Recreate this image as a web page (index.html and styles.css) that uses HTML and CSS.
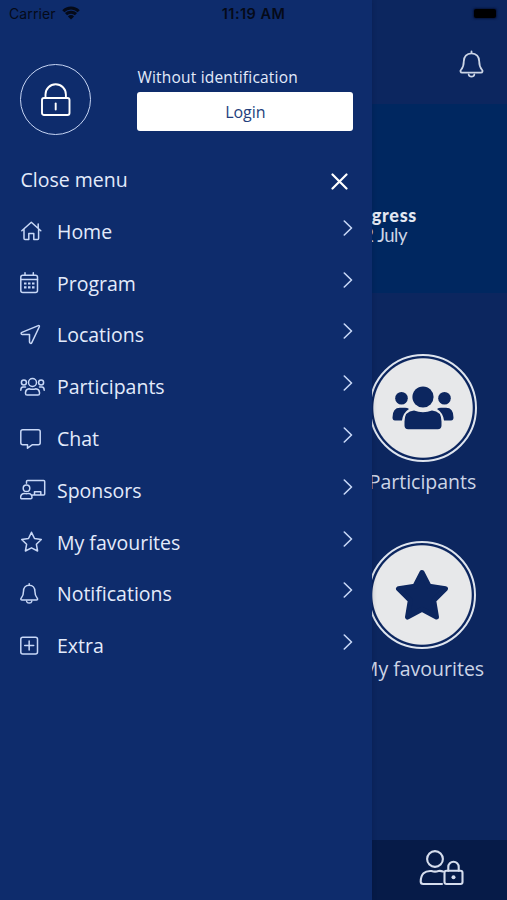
FILE: index.html
```html
<!DOCTYPE html>
<html lang="en">
<head>
<meta charset="utf-8">
<title>Congress</title>
<link rel="stylesheet" href="styles.css">
</head>
<body>
<svg class="defs" width="0" height="0">
  <defs>
    <symbol id="chevron" viewBox="0 0 10 16"><path d="M1.3 1 8.5 8l-7.2 7"/></symbol>
    <symbol id="bell" viewBox="0 0 24 26"><path d="M12 .8v2M12 2.800c-4.700 0-7.400 3.300-7.400 7.600 0 5.400-1.400 6.800-2.700 8.200-1 1.100-.5 2.600 1 2.600h18.200c1.500 0 2-1.500 1-2.600-1.300-1.400-2.700-2.800-2.700-8.200 0-4.300-2.700-7.600-7.400-7.600zM9.300 23.200c.5 2.600 4.900 2.600 5.400 0"/></symbol>
  </defs>
</svg>
<div class="app">
  <header class="status">
    <div class="carrier">Carrier
      <svg width="18" height="14" viewBox="0 0 18 14"><path d="M1.300 5.200a11 11 0 0 1 15.400 0M4 8.200a7.200 7.200 0 0 1 10 0"/><path class="dot" d="M9 13.500 5.900 10.400a4.400 4.400 0 0 1 6.200 0z"/></svg>
    </div>
    <div class="time">11:19 AM</div>
    <div class="battery"></div>
  </header>

  <nav class="drawer">
    <div class="account">
      <div class="avatar">
        <svg width="30" height="34" viewBox="0 0 30 34"><rect x="1" y="15" width="27.500" height="17" rx="2"/><path d="M4.500 15v-3.500a10.200 10.200 0 0 1 20.400 0V15"/><path class="key" d="M14.700 20.500v6"/></svg>
      </div>
      <div class="identity">
        <div class="who">Without identification</div>
        <button class="login">Login</button>
      </div>
    </div>
    <div class="close">
      <span>Close menu</span>
      <svg width="17" height="17" viewBox="0 0 17 17"><path d="m1.500 1.500 14 14M15.500 1.500l-14 14"/></svg>
    </div>
    <ul class="menu">
      <li><svg class="icon" viewBox="0 0 26 22"><path d="M1.800 10.700 11.300 2.200l9.500 8.500M4 9v9.500q0 1 1 1h3.800v-6h5v6h3.800q1 0 1-1V9M18.200 8V4"/></svg><span>Home</span><svg class="chevron"><use href="#chevron"/></svg></li>
      <li><svg class="icon" viewBox="0 0 26 22"><rect x=".8" y="3.200" width="16.700" height="17.300" rx="2"/><path d="M.8 7.500h16.700M5 .8v2.400M13.300 .8v2.400"/><path class="dots" d="M4 11.500h2.500M8 11.500h2.500M12 11.500h2.500M4 15.300h2.500M8 15.300h2.500M12 15.300h2.500"/></svg><span>Program</span><svg class="chevron"><use href="#chevron"/></svg></li>
      <li><svg class="icon" viewBox="0 0 26 22"><path d="M18.300 1.600 1.900 8.400c-1.300.6-.9 2 .3 2h7.300v7.700c0 1.500 1.800 1.700 2.300.5l7.500-15.800c.4-.9-.2-1.500-1-1.200z"/></svg><span>Locations</span><svg class="chevron"><use href="#chevron"/></svg></li>
      <li><svg class="icon" viewBox="0 0 26 22"><circle cx="12.500" cy="6.500" r="4"/><circle cx="3.900" cy="6.500" r="2.500"/><circle cx="21.100" cy="6.500" r="2.500"/><path d="M9 12.700q3.500 1.200 7 0 3.200.3 3.500 3.700v1q0 1.600-1.600 1.600H7.100q-1.600 0-1.600-1.600v-1q.3-3.400 3.500-3.700zM.8 14.300Q.8 11 3 11h2.500M24.200 14.300Q24.200 11 22 11h-2.500"/></svg><span>Participants</span><svg class="chevron"><use href="#chevron"/></svg></li>
      <li><svg class="icon" viewBox="0 0 26 22"><path d="M2.800 1.700h15.400q2 0 2 2v11q0 2-2 2h-5.700l-5 3.500v-3.500H2.800q-2 0-2-2v-11q0-2 2-2z"/></svg><span>Chat</span><svg class="chevron"><use href="#chevron"/></svg></li>
      <li><svg class="icon" viewBox="0 0 26 22"><circle cx="6.500" cy="9.300" r="3.300"/><path d="M4.300 14.400q2.200.8 4.500 0 3.200.4 3.200 4 0 1.400-1.400 1.400H2q-1.400 0-1.400-1.400 0-3.600 3.700-4zM6.500 4.200V2.500q0-1 1-1h16.200q1 0 1 1V15q0 1-1 1H12.500M14.500 16v-3.200h6.300V16"/></svg><span>Sponsors</span><svg class="chevron"><use href="#chevron"/></svg></li>
      <li><svg class="icon" viewBox="0 0 26 22"><path d="m11.500 1.300 3 6.200 6.800 1-4.900 4.800 1.200 6.700-6.100-3.200L5.400 20l1.200-6.700-4.900-4.800 6.800-1z"/></svg><span>My favourites</span><svg class="chevron"><use href="#chevron"/></svg></li>
      <li><svg class="icon" viewBox="0 0 26 22"><path d="M9.200 .8v1.500M9.200 2.300c-3.700 0-5.700 2.700-5.700 6 0 4.200-1 5.400-2.200 6.700-.9 1-.4 2.100.8 2.100h14.200c1.200 0 1.700-1.100.8-2.100-1.200-1.300-2.200-2.500-2.200-6.700 0-3.300-2-6-5.700-6zM6.700 18.600c.5 2 4.500 2 5 0"/></svg><span>Notifications</span><svg class="chevron"><use href="#chevron"/></svg></li>
      <li><svg class="icon" viewBox="0 0 26 22"><rect x=".8" y="2.200" width="16.700" height="16.700" rx="2"/><path d="M9.150 6v9M4.700 10.500h9"/></svg><span>Extra</span><svg class="chevron"><use href="#chevron"/></svg></li>
    </ul>
  </nav>

  <main class="page">
    <div class="topbar"><svg width="25" height="28"><use href="#bell"/></svg></div>
    <div class="banner">
      <div class="event">Congress</div>
      <div class="date">12 July</div>
    </div>
    <div class="tiles">
      <div class="tile">
        <div class="disc"><svg width="62" height="44" viewBox="0 0 62 44"><circle cx="31" cy="11" r="10.600"/><circle cx="9.500" cy="12.200" r="6.300"/><circle cx="52.500" cy="12.200" r="6.300"/><path d="M22 24.500q9 3.500 18 0 9.500.5 9.500 11v4q0 3.700-3.700 3.700H16.200q-3.700 0-3.700-3.700v-4q0-10.500 9.500-11zM.5 31.500Q.5 21.800 8 21.800h5q2.500 0 4 1.200-6 3.700-7 11.500H3q-2.500 0-2.500-3zM61.500 31.500q0-9.700-7.500-9.700h-5q-2.500 0-4 1.200 6 3.700 7 11.500h7q2.500 0 2.500-3z"/></svg></div>
        <span>Participants</span>
      </div>
      <div class="tile">
        <div class="disc"><svg width="54" height="52" viewBox="0 0 54 52"><path class="round" d="m27 3.500 7.200 13.800 16.300 2.400-11.800 11.800 2.800 16.600L27 40.300l-14.500 7.800 2.800-16.600L3.500 19.700l16.300-2.400z"/></svg></div>
        <span>My favourites</span>
      </div>
    </div>
    <footer class="tabbar"><svg width="46" height="37" viewBox="0 0 46 37"><circle cx="16" cy="10" r="7.900"/><path d="M24 22.500q-2.500-1-4.500-.5-3.500 1.200-7 0-10.500-.8-10.800 10.500 0 2.500 2.500 2.500H23"/><rect x="25.500" y="21.800" width="18" height="13.200" rx="2"/><path d="M29.300 21.800V18a5.200 5.200 0 0 1 10.400 0v3.800"/><circle class="dot" cx="34.500" cy="28.200" r="2"/></svg></footer>
  </main>
</div>
</body>
</html>
```
FILE: styles.css
```css
* { box-sizing: border-box; }
body { margin: 0; font-family: "Open Sans", sans-serif; color: #e3ebfb; background: #0c265f; }
svg { fill: none; stroke: currentColor; stroke-linecap: round; stroke-linejoin: round; flex: none; display: block; }
.defs { position: absolute; }
.app { position: relative; display: flex; width: 507px; height: 900px; overflow: hidden; }

.status { position: absolute; z-index: 3; top: 0; left: 0; width: 507px; height: 26px; padding: 0 11px 0 9px; display: grid; grid-template-columns: 1fr auto 1fr; align-items: center; font-family: Inter, sans-serif; font-size: 14px; color: #050a18; }
.carrier { display: flex; align-items: center; gap: 6px; letter-spacing: .1px; }
.carrier svg { stroke-width: 3; stroke-linecap: butt; }
.carrier .dot { fill: currentColor; stroke: none; }
.time { font-weight: 600; font-size: 14.500px; letter-spacing: .45px; padding-left: 2px; }
.battery { justify-self: end; width: 22px; height: 9px; border-radius: 2px; background: #000; box-shadow: 0 0 2px 1px #06133a; }

.drawer { position: relative; z-index: 2; flex: 0 0 372px; height: 900px; padding-top: 64px; background: #0e2c6c; box-shadow: 0 0 5px rgba(0, 10, 40, .22); }
.account { display: flex; height: 89px; padding-left: 20px; }
.avatar { display: flex; align-items: center; justify-content: center; width: 71px; height: 71px; border: 1.300px solid #c5d4f3; border-radius: 50%; color: #fff; }
.avatar svg { stroke-width: 1.900; }
.identity { margin-left: 46.400px; width: 216px; }
.who { height: 28px; line-height: 26px; font-size: 15.500px; letter-spacing: .2px; white-space: nowrap; }
.login { display: block; width: 100%; height: 39px; border: 0; border-radius: 3px; background: #fff; color: #243f7d; font: 16px "Open Sans", sans-serif; }
.close { display: flex; align-items: center; justify-content: space-between; height: 52px; padding: 0 24px 0 20.500px; font-size: 19.500px; }
.close svg { color: #fff; stroke-width: 2.200; margin-top: 4px; }
.menu { list-style: none; margin: 0; padding: .5px 19.500px 0 20px; font-size: 19.500px; }
.menu li { display: flex; align-items: center; height: 51.800px; }
.icon { width: 26px; height: 22px; margin-right: 11px; stroke-width: 1.500; color: #c8d8f7; }
.icon .dots { stroke-width: 2.200; stroke-linecap: butt; }
.menu span { flex: 1; }
.chevron { width: 10px; height: 16px; margin-top: -7px; stroke-width: 1.600; color: #c8d8f7; }

.page { flex: 0 0 169px; margin-left: -34px; height: 900px; display: flex; flex-direction: column; color: #ccd5e6; }
.topbar { height: 104px; padding: 50px 23px 0 0; display: flex; justify-content: flex-end; align-items: flex-start; }
.topbar svg { stroke-width: 1.700; }
.banner { height: 189px; padding: 101px 0 0 0; background: #002760; font-family: Lato, sans-serif; }
.event { width: 79px; display: flex; justify-content: flex-end; font-weight: 900; font-size: 18px; line-height: 20px; letter-spacing: .7px; color: #e3e8f2; }
.date { width: 69px; display: flex; justify-content: flex-end; font-size: 18.500px; line-height: 20px; letter-spacing: -.5px; }
.tiles { flex: 1; display: flex; flex-direction: column; align-items: center; gap: 42px; padding-top: 61px; }
.tile { display: flex; flex-direction: column; align-items: center; height: 145px; font-size: 19.500px; white-space: nowrap; }
.disc { display: flex; align-items: center; justify-content: center; width: 108px; height: 108px; border: 2px solid #dfe5ef; border-radius: 50%; color: #0c265f; background: radial-gradient(circle, #e7e8ea 49.200px, #0c265f 50.200px); flex: none; }
.disc svg { fill: currentColor; stroke: none; }
.disc .round { stroke: currentColor; stroke-width: 5; }
.tile span { line-height: 26px; margin-top: 7px; }
.tabbar { height: 60px; display: flex; justify-content: center; padding: 9px 0 0 38px; background: #061b48; }
.tabbar svg { stroke-width: 2.100; color: #d5dded; }
.tabbar .dot { fill: currentColor; stroke: none; }
```
